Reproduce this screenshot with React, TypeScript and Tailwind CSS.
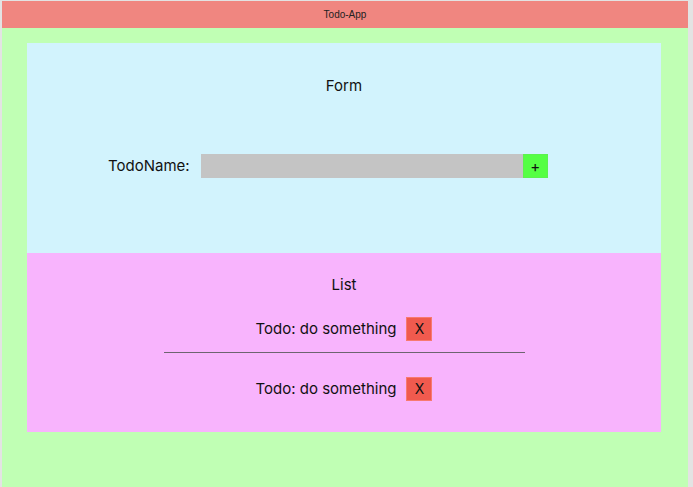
import { useState } from "react";

const todos = ["do something", "do something"];

export default function App() {
  const [name, setName] = useState("");

  return (
    <div className="h-[487px] w-[693px] bg-[#e3e3e3] pl-[2px] pr-[5px] pt-px font-['Inter',sans-serif] text-[#111]">
      <div className="flex h-full flex-col">
        <header className="flex h-[27px] items-center justify-center bg-[#f08680] font-['Liberation_Sans',Arial,sans-serif] text-[10px] text-[#222]">
          Todo-App
        </header>

        <main className="flex flex-1 flex-col bg-[#c0ffb4] pl-[25px] pr-[27px] pt-[15px]">
          {/* Form */}
          <section className="flex h-[210px] flex-col bg-[#d2f3fd]">
            <h2 className="mt-[33px] text-center text-[15px] leading-5">Form</h2>
            <div className="mt-[58px] flex items-center pl-[81px]">
              <label htmlFor="todo" className="text-[15px] leading-5">
                TodoName:
              </label>
              <input
                id="todo"
                value={name}
                onChange={(e) => setName(e.target.value)}
                className="ml-[11px] h-[24px] w-[322px] bg-[#c4c4c4] px-2 text-sm outline-none"
              />
              <button className="flex h-[24px] w-[25px] items-center justify-center border border-[#5cf24e] bg-[#55ff44] text-[15px] leading-none">
                +
              </button>
            </div>
          </section>

          {/* List */}
          <section className="flex h-[179px] flex-col items-center bg-[#f8b4fd]">
            <h2 className="mt-[22px] text-[15px] leading-5">List</h2>
            {todos.map((t, i) => (
              <div key={i} className="flex flex-col items-center">
                {i > 0 && <hr className="mt-[11px] w-[361px] border-t border-[#6e6470]" />}
                <div className={`flex items-center gap-[10px] ${i > 0 ? "mt-[24px]" : "mt-[22px]"}`}>
                  <span className="text-[15px] leading-5">Todo: {t}</span>
                  <button className="flex h-[24px] w-[26px] items-center justify-center border border-[#f77a70] bg-[#f05a4e] text-[14px] leading-none">
                    X
                  </button>
                </div>
              </div>
            ))}
          </section>
        </main>
      </div>
    </div>
  );
}
